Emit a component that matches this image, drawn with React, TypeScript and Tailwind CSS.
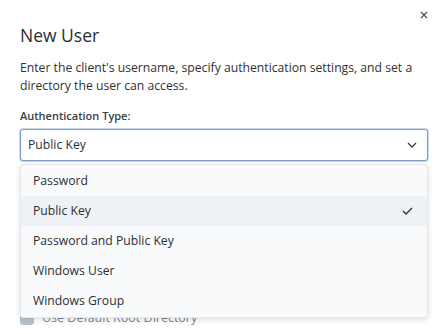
import React from 'react';

const options = ['Password', 'Public Key', 'Password and Public Key', 'Windows User', 'Windows Group'];

const font = { fontFamily: '"Open Sans", "Noto Sans", sans-serif' };

const App: React.FC = () => {
  const selected = 'Public Key';

  return (
    <div className="relative w-[448px] h-[334px] overflow-hidden bg-white text-[#323130]" style={font}>
      <button className="absolute top-[8px] right-[17px] w-[14px] h-[14px] flex items-center justify-center text-[#4a4f55]">
        <svg width="8" height="8" viewBox="0 0 8 8">
          <path d="M1 1 L7 7 M7 1 L1 7" stroke="currentColor" strokeWidth="1.2" />
        </svg>
      </button>

      <div className="px-5 pt-[23px]">
        <h1 className="text-[17.5px] leading-[24px] font-normal text-[#2b2f33]">New User</h1>
        <p className="mt-[12px] text-[12.2px] leading-[18px] text-[#323130]">
          Enter the client's username, specify authentication settings, and set a directory the user can access.
        </p>

        <div className="mt-[13px]">
          <label className="block text-[11px] leading-[16px] font-semibold text-[#3b4045]">Authentication Type:</label>
          <div className="relative mt-[5px]">
            <div className="h-[32px] rounded-[3px] border border-[#7c9cc4] shadow-[0_0_0_1px_#c9d8ea] bg-white flex items-center justify-between pl-[7px] pr-[10px]">
              <span className="text-[12.2px] text-[#2b2f33]">{selected}</span>
              <svg width="10" height="6" viewBox="0 0 10 6" className="text-[#3a3f44]">
                <path d="M1 1 L5 5 L9 1" fill="none" stroke="currentColor" strokeWidth="1.3" />
              </svg>
            </div>

            <ul className="absolute left-0 right-0 top-[35px] z-10 py-[1px] rounded-[3px] border border-[#e3e7ec] bg-[#f9fafb] shadow-[0_2px_6px_rgba(0,0,0,0.12)]">
              {options.map((opt) => (
                <li
                  key={opt}
                  className={`h-[30px] flex items-center justify-between pl-[12px] pr-[14px] text-[12.2px] text-[#2b2f33] ${
                    opt === selected ? 'bg-[#eef1f5]' : ''
                  }`}
                >
                  <span>{opt}</span>
                  {opt === selected && (
                    <svg width="11" height="8" viewBox="0 0 11 8" className="text-[#2b2f33]">
                      <path d="M1 4 L4 7 L10 1" fill="none" stroke="currentColor" strokeWidth="1.3" />
                    </svg>
                  )}
                </li>
              ))}
            </ul>
          </div>
        </div>

        <div className="mt-[14px] flex flex-col gap-[10px]">
          <div className="h-[60px]" />
          <div className="h-[54px]" />
          <label className="flex items-center gap-[8px] text-[12.5px] text-[#7b8a9c]">
            <span className="w-[14px] h-[14px] rounded-[3px] bg-[#b9c3ce]" />
            Use Default Root Directory
          </label>
        </div>
      </div>
    </div>
  );
};

export default App;
